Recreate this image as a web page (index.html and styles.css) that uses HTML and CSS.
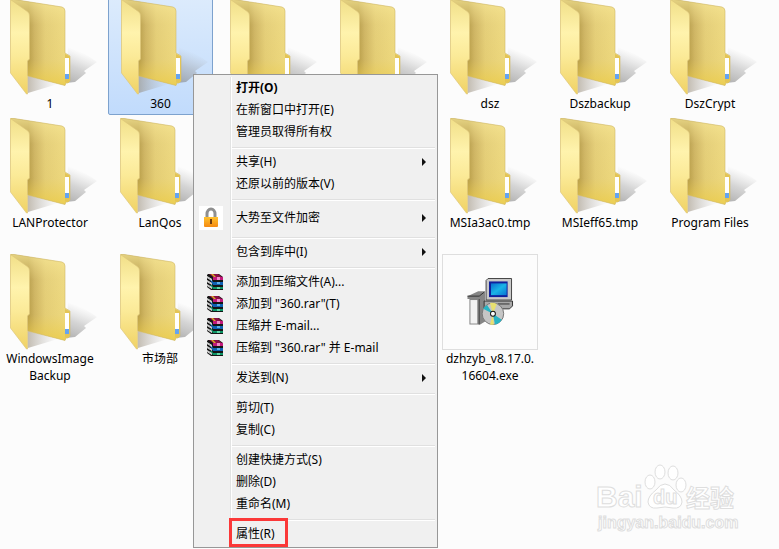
FILE: index.html
```html
<!DOCTYPE html>
<html lang="zh-CN">
<head>
  <meta charset="UTF-8">
  <meta name="viewport" content="width=device-width, initial-scale=1">
  <title>资源管理器</title>
  <link rel="stylesheet" href="styles.css">
</head>
<body>
  <!-- shared icons -->
  <svg class="defs" width="0" height="0" aria-hidden="true">
    <defs>
      <linearGradient id="back" x1="0" y1="0" x2="1" y2="0">
        <stop offset="0.3" stop-color="#b59b4a"/>
        <stop offset="0.4" stop-color="#ccb262"/>
        <stop offset="0.58" stop-color="#e3cd78"/>
        <stop offset="1" stop-color="#f0dc84"/>
      </linearGradient>
      <linearGradient id="glow" x1="0" y1="0" x2="0" y2="1">
        <stop offset="0" stop-color="#fbec9c" stop-opacity="0.7"/>
        <stop offset="0.3" stop-color="#f3e08e" stop-opacity="0.1"/>
        <stop offset="0.7" stop-color="#eccf55" stop-opacity="0.1"/>
        <stop offset="1" stop-color="#ebcb45" stop-opacity="0.8"/>
      </linearGradient>
      <linearGradient id="front" x1="0" y1="0" x2="0" y2="1">
        <stop offset="0" stop-color="#f1df88"/>
        <stop offset="0.35" stop-color="#fff3ad"/>
        <stop offset="0.6" stop-color="#fbea98"/>
        <stop offset="1" stop-color="#f0d264"/>
      </linearGradient>
      <linearGradient id="shade" gradientUnits="userSpaceOnUse" x1="72" y1="84" x2="84" y2="53">
        <stop offset="0" stop-color="#808080" stop-opacity="0.6"/>
        <stop offset="0.5" stop-color="#999" stop-opacity="0.4"/>
        <stop offset="1" stop-color="#aaa" stop-opacity="0"/>
      </linearGradient>
      <linearGradient id="under" x1="0" y1="0" x2="1" y2="0">
        <stop offset="0" stop-color="#8a7d68" stop-opacity="0.5"/>
        <stop offset="1" stop-color="#aaa" stop-opacity="0"/>
      </linearGradient>
      <linearGradient id="screen" x1="0" y1="0" x2="1" y2="1">
        <stop offset="0" stop-color="#0a6fd0"/>
        <stop offset="0.5" stop-color="#19b4e6"/>
        <stop offset="1" stop-color="#0a74d4"/>
      </linearGradient>
      <linearGradient id="gold" x1="0" y1="0" x2="0" y2="1">
        <stop offset="0" stop-color="#ffc22e"/>
        <stop offset="1" stop-color="#f58a12"/>
      </linearGradient>
    </defs>
    <symbol id="folder" viewBox="2 -1 96 96">
      <path d="M68 47Q84 52 97 62L84 71L86 73L75 82L66 83Z" fill="url(#shade)"/>
      <path d="M28 76L58 84L28 93Z" fill="url(#under)"/>
      <path d="M11 -1L62 7Q65 8 65 11V53L70 56V81L68 83H66L65 85.500L28 76L11 60Z" fill="url(#back)"/>
      <path d="M11 -1L62 7Q65 8 65 11V53L70 56V81L68 83H66L65 85.500L28 76L11 60Z" fill="url(#glow)" stroke="#d0b868" stroke-width="0.6"/>
      <path d="M65 54L70 56.500V80L68 82.500H65Z" fill="#e3c455"/>
      <path d="M65 58H69V79H65Z" fill="#fff"/>
      <path d="M65 74H69V79H65Z" fill="#64a4f0"/>
      <path d="M10.500 -0.500L28 12Q29.500 13.500 29.500 16V59L27.500 61V94L26.500 94L10.500 73Z" fill="url(#front)" stroke="#dcc67a" stroke-width="0.7"/>
    </symbol>
    <symbol id="rar" viewBox="0 0 16 16">
      <path d="M1 0H12L16 3V16H4L0 13V1Z" fill="#151515"/>
      <path d="M2 0H11L15 3H6Z" fill="#8a0f45"/>
      <path d="M4 0H6L9 3H7Z" fill="#d8b020"/>
      <path d="M6 3H16V6H6Z" fill="#c2187c"/>
      <path d="M10 3H13V6H10Z" fill="#f08cc8"/>
      <path d="M3 6H5L6 8H16V11H6Z" fill="#0f62b4"/>
      <path d="M10 8H13V10H10Z" fill="#58b0ec"/>
      <path d="M3 11H5L6 13H16V15H6Z" fill="#0e9466"/>
      <path d="M10 13H13V15H10Z" fill="#60d8a8"/>
      <path d="M0 2L5 5V7L0 4ZM0 6L5 9V11L0 8ZM0 10L5 13V15L0 12Z" fill="#f4f4f4"/>
      <path d="M0 3L5 6M0 7L5 10M0 11L5 14" stroke="#888" stroke-width="0.5"/>
    </symbol>
  </svg>

  <main class="files">
    <figure class="file"><svg class="icon"><use href="#folder"/></svg><figcaption>1</figcaption></figure>
    <figure class="file selected"><svg class="icon"><use href="#folder"/></svg><figcaption>360</figcaption></figure>
    <figure class="file"><svg class="icon"><use href="#folder"/></svg></figure>
    <figure class="file"><svg class="icon"><use href="#folder"/></svg></figure>
    <figure class="file"><svg class="icon"><use href="#folder"/></svg><figcaption>dsz</figcaption></figure>
    <figure class="file"><svg class="icon"><use href="#folder"/></svg><figcaption>Dszbackup</figcaption></figure>
    <figure class="file"><svg class="icon"><use href="#folder"/></svg><figcaption>DszCrypt</figcaption></figure>

    <figure class="file"><svg class="icon"><use href="#folder"/></svg><figcaption>LANProtector</figcaption></figure>
    <figure class="file"><svg class="icon"><use href="#folder"/></svg><figcaption>LanQos</figcaption></figure>
    <figure class="file fifth"><svg class="icon"><use href="#folder"/></svg><figcaption>MSIa3ac0.tmp</figcaption></figure>
    <figure class="file"><svg class="icon"><use href="#folder"/></svg><figcaption>MSIeff65.tmp</figcaption></figure>
    <figure class="file"><svg class="icon"><use href="#folder"/></svg><figcaption>Program Files</figcaption></figure>

    <figure class="file"><svg class="icon"><use href="#folder"/></svg><figcaption>WindowsImage<br>Backup</figcaption></figure>
    <figure class="file"><svg class="icon"><use href="#folder"/></svg><figcaption>市场部</figcaption></figure>
    <figure class="file fifth">
      <svg class="icon framed" viewBox="442 254 96 96">
        <path d="M467 296L478 291H485V322L480 325H469V299H467Z" fill="#858585"/>
        <path d="M467 296H479L484 292" fill="none" stroke="#333"/>
        <path d="M470 300H477V324H470Z" fill="#f2f2f2"/>
        <path d="M479 299V325" stroke="#444"/>
        <path d="M484 309V301H513V306L510 309Z" fill="#a8a8a8" stroke="#333"/>
        <path d="M498 304H510" stroke="#333"/>
        <path d="M488 278H512V300H486V280Z" fill="#c9c9c9" stroke="#444"/>
        <path d="M489 281H508V297H489Z" fill="#10209c"/>
        <path d="M491 283H507V295H491Z" fill="url(#screen)"/>
        <circle cx="493" cy="314" r="11" fill="#c6c6c6" stroke="#777"/>
        <path d="M493 314L490 303A11 11 0 0 1 497 304ZM493 314L490 325A11 11 0 0 0 494 325Z" fill="#e8e070"/>
        <path d="M493 314L483 309A11 11 0 0 1 487 305ZM493 314L502 320A11 11 0 0 1 495 325Z" fill="#28b4c4"/>
        <circle cx="493" cy="314" r="3" fill="#111"/>
        <circle cx="493" cy="314" r="2" fill="#fff"/>
      </svg>
      <figcaption>dzhzyb_v8.17.0.<br>16604.exe</figcaption>
    </figure>
  </main>

  <ul class="menu">
    <li><button class="item default">打开(O)</button></li>
    <li><button class="item">在新窗口中打开(E)</button></li>
    <li><button class="item">管理员取得所有权</button></li>
    <li class="line"></li>
    <li><button class="item more">共享(H)</button></li>
    <li><button class="item">还原以前的版本(V)</button></li>
    <li class="line"></li>
    <li>
      <button class="item tall more">
        <svg class="lock" viewBox="0 0 24 24">
          <path d="M0 0H24V24H0Z" fill="#fff"/>
          <path d="M8 12V8A4 5 0 0 1 16 8V12" fill="none" stroke="#8f8f8f" stroke-width="3"/>
          <path d="M5 11H19V20Q19 21 18 21H6Q5 21 5 20Z" fill="url(#gold)"/>
          <path d="M11 13H13V18H11Z" fill="#6b3a10"/>
        </svg>大势至文件加密
      </button>
    </li>
    <li class="line"></li>
    <li><button class="item more">包含到库中(I)</button></li>
    <li class="line"></li>
    <li><button class="item"><svg class="rar"><use href="#rar"/></svg>添加到压缩文件(A)...</button></li>
    <li><button class="item"><svg class="rar"><use href="#rar"/></svg>添加到 "360.rar"(T)</button></li>
    <li><button class="item"><svg class="rar"><use href="#rar"/></svg>压缩并 E-mail...</button></li>
    <li><button class="item"><svg class="rar"><use href="#rar"/></svg>压缩到 "360.rar" 并 E-mail</button></li>
    <li class="line"></li>
    <li><button class="item more">发送到(N)</button></li>
    <li class="line"></li>
    <li><button class="item">剪切(T)</button></li>
    <li><button class="item">复制(C)</button></li>
    <li class="line"></li>
    <li><button class="item">创建快捷方式(S)</button></li>
    <li><button class="item">删除(D)</button></li>
    <li><button class="item">重命名(M)</button></li>
    <li class="line"></li>
    <li><button class="item marked">属性(R)</button></li>
  </ul>

  <svg class="watermark" viewBox="590 460 150 75">
    <g class="outline">
      <ellipse cx="650" cy="482" rx="5" ry="7"/>
      <ellipse cx="660" cy="472" rx="5" ry="7"/>
      <ellipse cx="673" cy="473" rx="5" ry="7"/>
      <ellipse cx="681" cy="485" rx="5" ry="7"/>
      <path d="M665 484Q670 484 674 490Q682 496 682 502Q681 509 673 508Q665 506 657 508Q649 509 648 502Q648 496 656 490Q660 484 665 484Z"/>
      <text class="brand" x="596" y="507">Bai</text>
      <text class="du" x="653" y="504">du</text>
      <text class="cn" x="686" y="507">经验</text>
      <text class="site" x="598" y="528">jingyan.baidu.com</text>
    </g>
  </svg>
</body>
</html>
```

FILE: styles.css
```css
body {
  margin: 0;
  background: #fcfcfc;
  color: #000;
  font: 12px/17px "Noto Sans", "Noto Sans CJK SC", sans-serif;
}
.defs {
  position: absolute;
}

/* file grid */
.files {
  display: grid;
  grid-template-columns: repeat(7, 100px);
  grid-template-rows: 113px 130px auto;
  gap: 6px 10px;
  margin-top: -1px;
}
.file {
  margin: 0;
  text-align: center;
}
.fifth {
  grid-column: 5;
}
.icon {
  display: block;
  width: 96px;
  height: 96px;
  margin: 0 auto;
}
.framed {
  box-sizing: border-box;
  border: 1px solid #dedede;
}
.selected {
  margin: -2px -3px -3px -2px;
  padding: 1px 0 2px;
  border: 1px solid #7da2ce;
  border-radius: 2px;
  background: linear-gradient(#dcebfc, #c1dbfc);
}

/* context menu */
.menu {
  position: absolute;
  top: 74px;
  left: 193px;
  box-sizing: border-box;
  width: 245px;
  margin: 0;
  padding: 2px;
  border: 1px solid #979797;
  background: linear-gradient(90deg, #e2e3e3 50%, #fff 50%) 36px 2px / 2px calc(100% - 4px) no-repeat #f0f0f0;
  list-style: none;
}
.item {
  position: relative;
  display: block;
  width: 100%;
  height: 22px;
  padding: 0 0 1px 40px;
  border: 0;
  background: none;
  color: #000;
  font: inherit;
  text-align: left;
}
.default {
  font-weight: bold;
}
.tall {
  height: 30px;
}
.line {
  height: 1px;
  margin: 4px 0 2px 36px;
  border-top: 1px solid #e0e0e0;
  background: #fff;
}
.more::after {
  content: "";
  position: absolute;
  top: calc(50% - 4px);
  right: 9px;
  border: 4px solid transparent;
  border-right: 0;
  border-left-color: #111;
}
.lock {
  position: absolute;
  top: 3px;
  left: 3px;
  width: 24px;
  height: 24px;
}
.rar {
  position: absolute;
  top: 3px;
  left: 11px;
  width: 16px;
  height: 16px;
}
.marked::before {
  content: "";
  position: absolute;
  top: -5px;
  left: 33px;
  box-sizing: border-box;
  width: 59px;
  height: 29px;
  border: 3px solid #fb3838;
}

/* site mark */
.watermark {
  position: absolute;
  top: 460px;
  left: 590px;
  width: 150px;
  height: 75px;
}
.outline {
  fill: #fff;
  stroke: #dedede;
  stroke-width: 1px;
  font-family: "Liberation Sans", "Noto Sans CJK SC", sans-serif;
  font-weight: bold;
}
.brand {
  font-size: 30px;
}
.du {
  font-size: 20px;
}
.cn {
  font-size: 24px;
}
.site {
  font-size: 16px;
}
```
